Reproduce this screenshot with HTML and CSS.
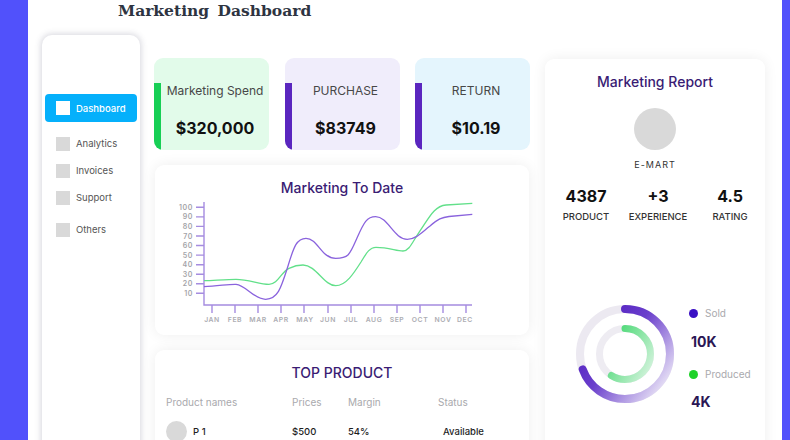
FILE: index.html
```html
<!DOCTYPE html>
<html lang="en">
<head>
<meta charset="utf-8">
<title>Marketing Dashboard</title>
<link rel="stylesheet" href="styles.css">
</head>
<body>
<div class="frame">
  <div class="edge edge-left"></div>
  <div class="main">
    <header class="topbar"><h1>Marketing Dashboard</h1></header>
    <div class="layout">
      <nav class="sidebar">
        <a class="nav-item active"><span class="nav-icon"></span>Dashboard</a>
        <a class="nav-item first"><span class="nav-icon"></span>Analytics</a>
        <a class="nav-item"><span class="nav-icon"></span>Invoices</a>
        <a class="nav-item"><span class="nav-icon"></span>Support</a>
        <a class="nav-item last"><span class="nav-icon"></span>Others</a>
      </nav>

      <section class="content">
        <div class="cards">
          <div class="stat-card green">
            <span class="bar"></span>
            <div class="stat-body">
              <div class="stat-label">Marketing Spend</div>
              <div class="stat-value">$320,000</div>
            </div>
          </div>
          <div class="stat-card lavender">
            <span class="bar"></span>
            <div class="stat-body">
              <div class="stat-label">PURCHASE</div>
              <div class="stat-value">$83749</div>
            </div>
          </div>
          <div class="stat-card sky">
            <span class="bar"></span>
            <div class="stat-body">
              <div class="stat-label">RETURN</div>
              <div class="stat-value">$10.19</div>
            </div>
          </div>
        </div>

        <div class="panel chart-panel">
          <h2 class="panel-title">Marketing To Date</h2>
          <svg class="chart" width="374" height="130" viewBox="0 0 374 130">
            <g class="axis" stroke="#a58ce0" stroke-width="1.4" fill="none">
              <path d="M50,4 V107 H318"/>
              <path d="M42,9.3 H50 M42,18.9 H50 M42,28.4 H50 M42,38 H50 M42,47.5 H50 M42,57.1 H50 M42,66.7 H50 M42,76.2 H50 M42,85.8 H50 M42,95.3 H50"/>
              <path d="M58,107 V115 M81,107 V115 M104,107 V115 M127,107 V115 M150,107 V115 M174,107 V115 M197,107 V115 M220,107 V115 M243,107 V115 M266,107 V115 M289,107 V115 M312,107 V115"/>
            </g>
            <g class="ylabels" fill="#a3a3a8" font-size="7" text-anchor="end">
              <text x="39" y="11.8">100</text>
              <text x="39" y="21.4">90</text>
              <text x="39" y="30.9">80</text>
              <text x="39" y="40.5">70</text>
              <text x="39" y="50">60</text>
              <text x="39" y="59.6">50</text>
              <text x="39" y="69.2">40</text>
              <text x="39" y="78.7">30</text>
              <text x="39" y="88.3">20</text>
              <text x="39" y="97.8">10</text>
            </g>
            <g class="xlabels" fill="#adadb3" font-size="6.8" text-anchor="middle">
              <text x="58" y="124">JAN</text>
              <text x="81" y="124">FEB</text>
              <text x="104" y="124">MAR</text>
              <text x="127" y="124">APR</text>
              <text x="151" y="124">MAY</text>
              <text x="174" y="124">JUN</text>
              <text x="197" y="124">JUL</text>
              <text x="220" y="124">AUG</text>
              <text x="243" y="124">SEP</text>
              <text x="266" y="124">OCT</text>
              <text x="289" y="124">NOV</text>
              <text x="311" y="124">DEC</text>
            </g>
            <path fill="none" stroke="#62e08a" stroke-width="1.3" d="M50,82.7 C65,82 75,81.3 82,81.3 C95,81.3 105,86.3 115,86.3 C124,86.3 127,74 135,70.3 C142,67 145,67 149,67 C162,67 170,87.7 181.7,87.7 C192,87.7 200,75 207,64 C213,54 216,49.3 222,49.3 C235,49.3 242,53 249,53 C255,53 258,45 265,34.3 C275,20 280,8 292,7 L318.3,5.3"/>
            <path fill="none" stroke="#8a63dd" stroke-width="1.3" d="M50,88.7 C65,88 75,86 82,86.3 C92,87 100,101.5 111.7,101.3 C124,101 127,90 134,68 C140,48 143,40.3 152,40.3 C164,40.3 167,60.3 181.7,60.3 C195,60.3 196,56 203,40 C210,24 213,18.7 221.7,18.7 C234,18.7 240,41.3 253.3,41.3 C262,41.3 268,34 276,28 C284,21 288,19.3 295,18.5 L318.3,16.3"/>
          </svg>
        </div>

        <div class="panel products">
          <h2 class="panel-title">TOP PRODUCT</h2>
          <div class="table">
            <div class="th">Product names</div>
            <div class="th">Prices</div>
            <div class="th">Margin</div>
            <div class="th">Status</div>
            <div class="td name"><span class="thumb"></span>P 1</div>
            <div class="td">$500</div>
            <div class="td">54%</div>
            <div class="td status">Available</div>
          </div>
        </div>
      </section>

      <aside class="panel report">
        <h2 class="panel-title">Marketing Report</h2>
        <div class="avatar"></div>
        <div class="brand">E-MART</div>
        <div class="stats">
          <div class="stat"><div class="num">4387</div><div class="cap">PRODUCT</div></div>
          <div class="stat"><div class="num">+3</div><div class="cap">EXPERIENCE</div></div>
          <div class="stat"><div class="num">4.5</div><div class="cap">RATING</div></div>
        </div>
        <div class="donut-row">
          <svg class="donut" width="100" height="100" viewBox="0 0 100 100">
            <defs>
              <linearGradient id="gp" gradientUnits="userSpaceOnUse" x1="75" y1="5" x2="15" y2="85">
                <stop offset="0" stop-color="#4f1bbf"/>
                <stop offset="0.45" stop-color="#6a3fcc"/>
                <stop offset="1" stop-color="#e2daf4"/>
              </linearGradient>
              <linearGradient id="gg" gradientUnits="userSpaceOnUse" x1="60" y1="24" x2="32" y2="76">
                <stop offset="0" stop-color="#33d463"/>
                <stop offset="1" stop-color="#d3f3dc"/>
              </linearGradient>
            </defs>
            <circle cx="50" cy="50" r="45" fill="none" stroke="#ece9f1" stroke-width="8"/>
            <circle cx="50" cy="50" r="45" fill="none" stroke="url(#gp)" stroke-width="8" stroke-linecap="round" stroke-dasharray="196 400" transform="rotate(-90 50 50)"/>
            <circle cx="50" cy="50" r="25.5" fill="none" stroke="#eeecf2" stroke-width="7"/>
            <circle cx="50" cy="50" r="25.5" fill="none" stroke="url(#gg)" stroke-width="7" stroke-linecap="round" stroke-dasharray="94 400" transform="rotate(-90 50 50)"/>
          </svg>
          <div class="legend">
            <div class="legend-key"><span class="dot dot-sold"></span>Sold</div>
            <div class="legend-val first">10K</div>
            <div class="legend-key second"><span class="dot dot-prod"></span>Produced</div>
            <div class="legend-val last">4K</div>
          </div>
        </div>
      </aside>
    </div>
  </div>
  <div class="edge edge-right"></div>
</div>
</body>
</html>
```

FILE: styles.css
```css
* { box-sizing: border-box; }

html, body {
  margin: 0;
  padding: 0;
  background: #ffffff;
}

body {
  font-family: Inter, "Noto Sans", "Liberation Sans", sans-serif;
  color: #222;
}

.frame {
  display: flex;
  width: 790px;
  height: 440px;
  overflow: hidden;
}

.edge {
  flex: none;
  background: #5151fb;
}
.edge-left { width: 28px; }
.edge-right { width: 8px; }

.main {
  flex: 1;
  display: flex;
  flex-direction: column;
  background: #ffffff;
  min-width: 0;
}

.topbar {
  height: 35px;
  flex: none;
  padding-left: 90px;
}

.topbar h1 {
  margin: 0;
  font-family: "DejaVu Serif", "Liberation Serif", serif;
  font-size: 15.5px;
  line-height: 22px;
  font-weight: 600;
  color: #2e3441;
  word-spacing: 3px;
}

.layout {
  flex: 1;
  display: flex;
  align-items: flex-start;
  min-height: 0;
}

/* Sidebar */
.sidebar {
  flex: none;
  margin-left: 14px;
  width: 98px;
  height: 420px;
  background: #fff;
  border-radius: 10px 10px 0 0;
  box-shadow: 0 0 6px 1px rgba(70, 70, 100, 0.22);
  padding: 59px 3px 0;
  display: flex;
  flex-direction: column;
}

.nav-item {
  display: flex;
  align-items: center;
  height: 14px;
  padding-left: 11px;
  font-size: 9.5px;
  color: #555;
  margin-top: 13px;
}

.nav-item.first { margin-top: 14.5px; }
.nav-item.last { margin-top: 18px; }

.nav-item.active {
  margin-top: 0;
  height: 28px;
  background: #05b0fb;
  border-radius: 4px;
  color: #fff;
  font-weight: 500;
}

.nav-icon {
  width: 14px;
  height: 14px;
  background: #d9d9d9;
  margin-right: 6px;
  flex: none;
}

.nav-item.active .nav-icon { background: #fff; }

/* Content */
.content {
  flex: none;
  margin-left: 14px;
  width: 376px;
  padding-top: 23px;
  display: flex;
  flex-direction: column;
  gap: 15px;
}

.cards {
  display: grid;
  grid-template-columns: repeat(3, 115px);
  column-gap: 15.5px;
}

.stat-card {
  height: 92px;
  border-radius: 9px;
  display: flex;
  overflow: hidden;
}

.stat-card.green { background: #e2fbea; }
.stat-card.lavender { background: #f0edfb; }
.stat-card.sky { background: #e4f5fd; }

.bar {
  flex: none;
  width: 7px;
  margin-top: 25px;
  background: #5a26bf;
}
.green .bar { background: #17cf55; }

.stat-body {
  flex: 1;
  display: flex;
  flex-direction: column;
  align-items: center;
  padding-top: 25px;
}

.stat-label {
  font-size: 12px;
  line-height: 15px;
  color: #474747;
}

.stat-value {
  margin-top: 20px;
  font-size: 16px;
  line-height: 20px;
  font-weight: 700;
  color: #111;
}

.panel {
  background: #fff;
  border-radius: 9px;
  box-shadow: 0 0 14px rgba(0, 0, 0, 0.07);
}

.panel-title {
  margin: 0;
  text-align: center;
  font-size: 14px;
  line-height: 18px;
  font-weight: 500;
  color: #3a1c74;
}

.chart-panel {
  margin: 0 1px;
  height: 170px;
  padding-top: 14px;
}

.chart {
  display: block;
  margin-top: 1px;
  margin-left: -1px;
  font-family: Inter, "Noto Sans", sans-serif;
  font-weight: 600;
  letter-spacing: 0.6px;
}

.products {
  margin: 0 1px;
  height: 120px;
  padding-top: 14px;
}

.table {
  display: grid;
  grid-template-columns: 126px 56px 90px 1fr;
  padding-left: 11px;
  margin-top: 13px;
}

.th {
  font-size: 10px;
  line-height: 14px;
  color: #a9a9ad;
}

.td {
  margin-top: 12px;
  height: 21px;
  display: flex;
  align-items: center;
  font-size: 9.5px;
  font-weight: 500;
  color: #1e1e1e;
}

.td.status { padding-left: 5px; }

.thumb {
  width: 21px;
  height: 21px;
  border-radius: 50%;
  background: #d9d9d9;
  margin-right: 6px;
}

/* Report */
.report {
  flex: none;
  margin-left: 15px;
  margin-top: 24px;
  width: 220px;
  height: 400px;
  padding-top: 14px;
}

.avatar {
  width: 42px;
  height: 42px;
  border-radius: 50%;
  background: #d9d9d9;
  margin: 17px auto 0;
}

.brand {
  margin-top: 9px;
  text-align: center;
  font-size: 9px;
  line-height: 12px;
  letter-spacing: 1px;
  color: #333;
}

.stats {
  display: grid;
  grid-template-columns: repeat(3, 72px);
  padding-left: 5px;
  margin-top: 15px;
}

.stat { text-align: center; }

.num {
  font-size: 16px;
  line-height: 20px;
  font-weight: 700;
  color: #111;
}

.cap {
  margin-top: 5px;
  font-size: 9.5px;
  line-height: 12px;
  font-weight: 500;
  color: #333;
}

.donut-row {
  display: flex;
  margin-top: 81px;
  padding-left: 30px;
}

.donut { display: block; flex: none; }

.legend {
  margin-left: 14px;
  padding-top: 2px;
}

.legend-key {
  display: flex;
  align-items: center;
  height: 14px;
  font-size: 10px;
  color: #a9a9ad;
}

.legend-key.second { margin-top: 16px; }

.dot {
  width: 9px;
  height: 9px;
  border-radius: 50%;
  margin-right: 7px;
}
.dot-sold { background: #3a10c4; }
.dot-prod { background: #1fd22a; }

.legend-val {
  padding-left: 2px;
  font-size: 14px;
  line-height: 18px;
  font-weight: 700;
  color: #2a1654;
}
.legend-val.first { margin-top: 13px; }
.legend-val.last { margin-top: 11.7px; }
```
